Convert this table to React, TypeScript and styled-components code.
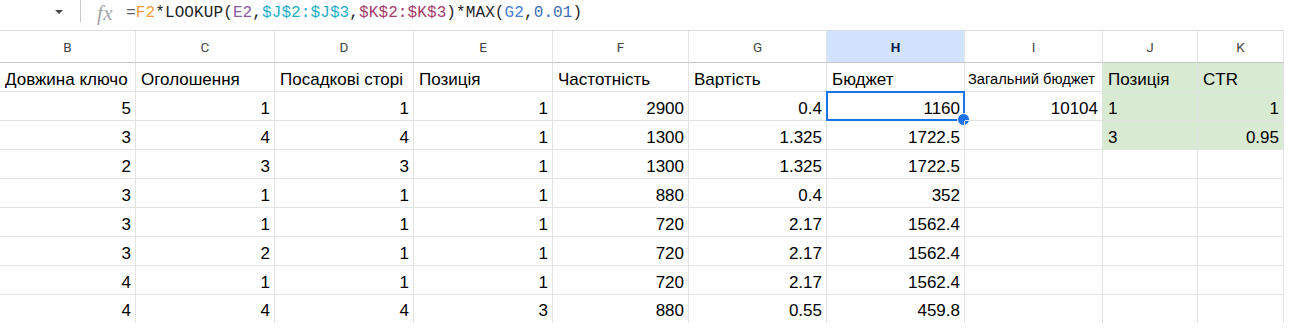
import React from "react";
import styled, { createGlobalStyle, css } from "styled-components";

const Global = createGlobalStyle`
  html, body { margin: 0; padding: 0; background: #ffffff; }
  body { font-family: "Liberation Sans", Arial, sans-serif; color: #000; }
`;

const COLS = [136, 139, 139, 139, 136, 138, 138, 138, 95, 86];
const TEMPLATE = COLS.map((w) => `${w}px`).join(" ");
const LETTERS = ["B", "C", "D", "E", "F", "G", "H", "I", "J", "K"];
const GRID = "#e2e3e3";
const GREEN = "#d9ead3";

const Page = styled.div`
  width: 1293px;
  height: 334px;
  overflow: hidden;
  background: #fff;
`;

const FormulaBar = styled.div`
  height: 30px;
  display: flex;
  align-items: flex-start;
`;

const NameBoxArrow = styled.div`
  width: 81px;
  height: 22px;
  display: flex;
  justify-content: flex-end;
  align-items: center;
  padding-right: 17px;
  box-sizing: border-box;
  border-right: 1px solid #c7c7c7;
`;

const Triangle = styled.span`
  width: 0;
  height: 0;
  border-left: 4px solid transparent;
  border-right: 4px solid transparent;
  border-top: 4px solid #444746;
  margin-top: 1px;
`;

const Fx = styled.span`
  margin-left: 16px;
  margin-top: 1px;
  font-family: "Liberation Serif", "DejaVu Serif", serif;
  font-style: italic;
  font-size: 21px;
  line-height: 24px;
  color: #a3a7ab;
  letter-spacing: 0.5px;
`;

const Formula = styled.div`
  margin-left: 13px;
  margin-top: 1px;
  font-family: "Liberation Mono", "DejaVu Sans Mono", monospace;
  font-size: 16px;
  letter-spacing: 0.1px;
  line-height: 24px;
  color: #1f1f1f;
  white-space: pre;
`;

const Tok = styled.span<{ $c: string }>`
  color: ${(p) => p.$c};
`;

const Sheet = styled.div`
  width: 1284px;
  border-top: 1px solid #dadce0;
`;

const Row = styled.div<{ $h: number }>`
  display: grid;
  grid-template-columns: ${TEMPLATE};
  height: ${(p) => p.$h}px;
`;

const HeaderCell = styled.div<{ $selected?: boolean }>`
  box-sizing: border-box;
  border-right: 1px solid ${GRID};
  border-bottom: 1px solid #c4c7c5;
  display: flex;
  align-items: center;
  justify-content: center;
  font-family: Roboto, "Liberation Sans", sans-serif;
  font-size: 13.5px;
  color: #444746;
  ${(p) =>
    p.$selected &&
    css`
      background: #d3e3fd;
      color: #041e49;
      font-weight: 700;
    `}
`;

const Cell = styled.div<{
  $right?: boolean;
  $bg?: string;
  $size?: number;
  $last?: boolean;
}>`
  position: relative;
  box-sizing: border-box;
  border-right: 1px solid ${GRID};
  border-bottom: ${(p) => (p.$last ? "none" : `1px solid ${GRID}`)};
  background: ${(p) => p.$bg || "transparent"};
  display: flex;
  align-items: flex-end;
  justify-content: ${(p) => (p.$right ? "flex-end" : "flex-start")};
  padding: 0 4px ${(p) => (p.$last ? 3 : 2)}px ${(p) => (p.$size ? 3 : 5)}px;
  font-size: ${(p) => p.$size || 17}px;
  line-height: 19px;
  color: #000;
  white-space: nowrap;
  overflow: visible;
`;

const Clip = styled.span`
  overflow: hidden;
  display: block;
`;

const Selection = styled.div`
  position: absolute;
  left: -1px;
  top: -1px;
  right: -1px;
  bottom: -1px;
  border: 2px solid #1a73e8;
  pointer-events: none;
`;

const Handle = styled.div`
  position: absolute;
  right: -7px;
  bottom: -7px;
  width: 11px;
  height: 11px;
  border-radius: 50%;
  background: #1a73e8;
  border: 1px solid #fff;
`;

type V = string | number | "";
const header: string[] = [
  "Довжина ключо",
  "Оголошення",
  "Посадкові сторі",
  "Позиція",
  "Частотність",
  "Вартість",
  "Бюджет",
  "Загальний бюджет",
  "Позиція",
  "CTR",
];

const data: V[][] = [
  [5, 1, 1, 1, 2900, 0.4, 1160, 10104, "1", 1],
  [3, 4, 4, 1, 1300, 1.325, 1722.5, "", "3", 0.95],
  [2, 3, 3, 1, 1300, 1.325, 1722.5, "", "", ""],
  [3, 1, 1, 1, 880, 0.4, 352, "", "", ""],
  [3, 1, 1, 1, 720, 2.17, 1562.4, "", "", ""],
  [3, 2, 1, 1, 720, 2.17, 1562.4, "", "", ""],
  [4, 1, 1, 1, 720, 2.17, 1562.4, "", "", ""],
  [4, 4, 4, 3, 880, 0.55, 459.8, "", "", ""],
];

const greenRows = 3;

export default function App() {
  return (
    <Page>
      <Global />
      <FormulaBar>
        <NameBoxArrow>
          <Triangle />
        </NameBoxArrow>
        <Fx>fx</Fx>
        <Formula>
          <Tok $c="#5f6368">=</Tok>
          <Tok $c="#f09a3e">F2</Tok>
          <Tok $c="#1f1f1f">*LOOKUP(</Tok>
          <Tok $c="#8b5a9f">E2</Tok>
          <Tok $c="#1f1f1f">,</Tok>
          <Tok $c="#1eaec6">$J$2:$J$3</Tok>
          <Tok $c="#1f1f1f">,</Tok>
          <Tok $c="#a63a6c">$K$2:$K$3</Tok>
          <Tok $c="#1f1f1f">)*MAX(</Tok>
          <Tok $c="#4a7fd4">G2</Tok>
          <Tok $c="#1f1f1f">,</Tok>
          <Tok $c="#3d6fb8">0.01</Tok>
          <Tok $c="#1f1f1f">)</Tok>
        </Formula>
      </FormulaBar>
      <Sheet>
        <Row $h={32}>
          {LETTERS.map((l) => (
            <HeaderCell key={l} $selected={l === "H"}>
              {l}
            </HeaderCell>
          ))}
        </Row>
        <Row $h={29}>
          {header.map((t, i) => (
            <Cell
              key={i}
              $bg={i >= 8 ? GREEN : undefined}
              $size={i === 7 ? 14.7 : undefined}
            >
              <Clip>{t}</Clip>
            </Cell>
          ))}
        </Row>
        {data.map((r, ri) => (
          <Row key={ri} $h={ri === data.length - 1 ? 28 : 29}>
            {r.map((v, ci) => (
              <Cell
                key={ci}
                $right={typeof v === "number"}
                $bg={ci >= 8 && ri < greenRows - 1 ? GREEN : undefined}
                $last={ri === data.length - 1}
              >
                {v}
                {ri === 0 && ci === 6 && (
                  <Selection>
                    <Handle />
                  </Selection>
                )}
              </Cell>
            ))}
          </Row>
        ))}
      </Sheet>
    </Page>
  );
}
